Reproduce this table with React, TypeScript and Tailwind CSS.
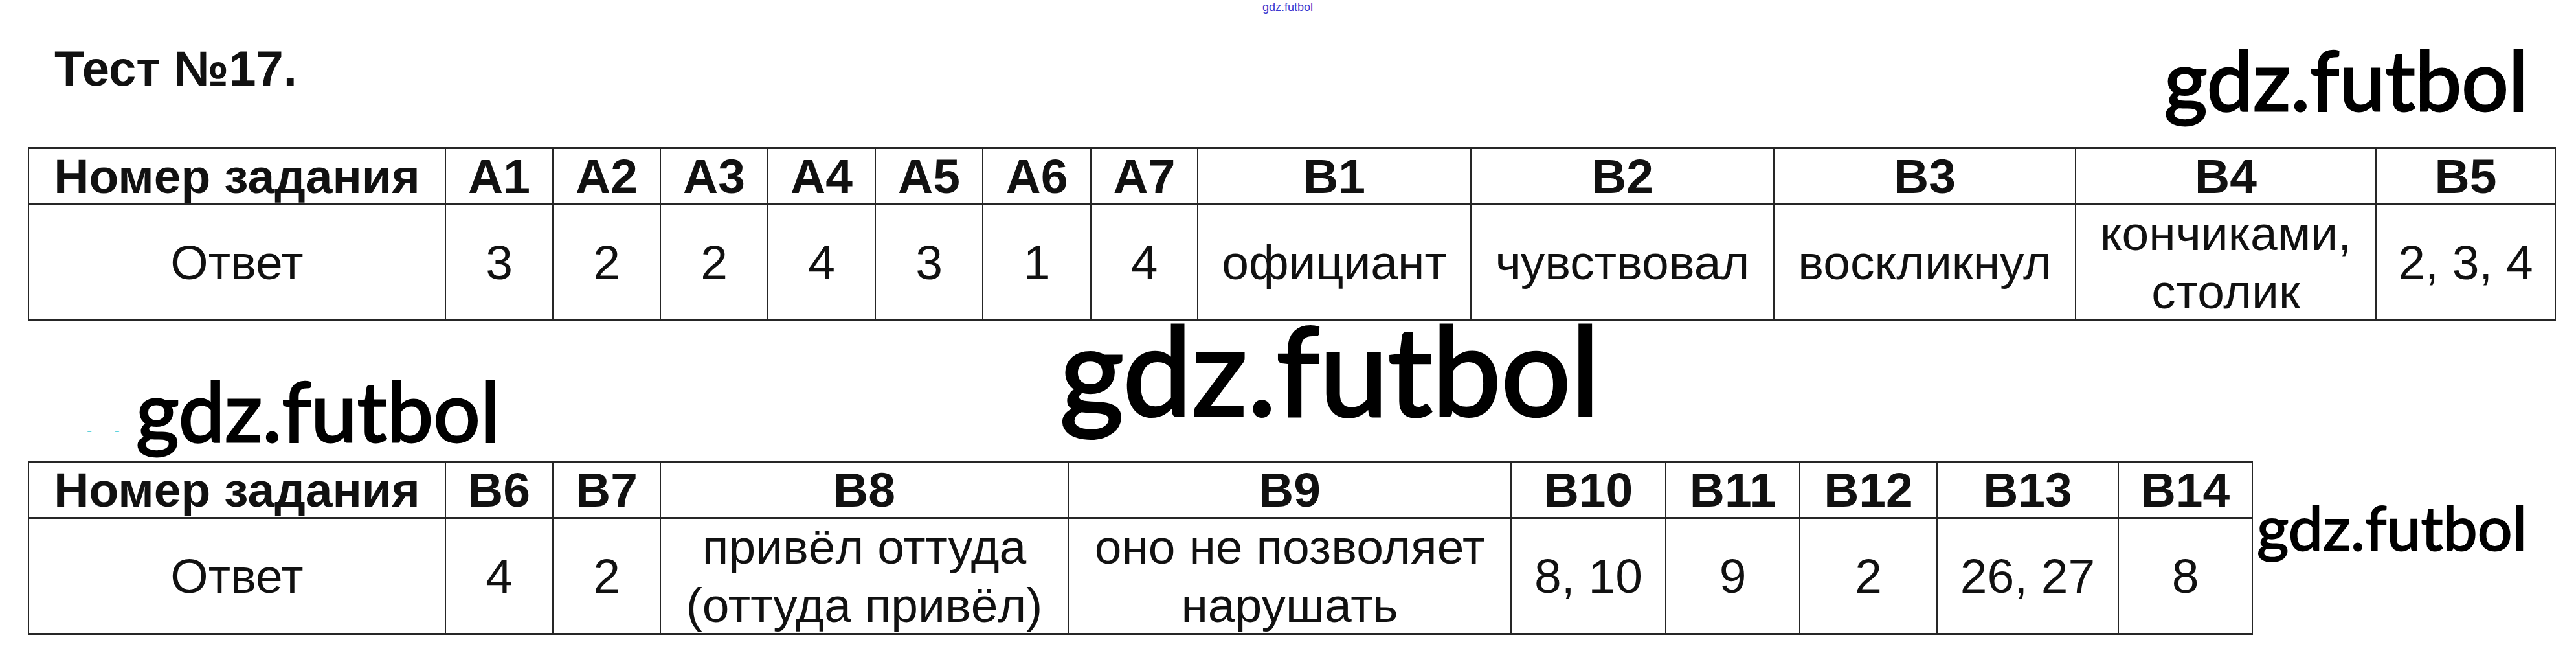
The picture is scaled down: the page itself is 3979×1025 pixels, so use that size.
import React from 'react';

type Col = { head: string; answer: string[]; w: number };

const test1: Col[] = [
  { head: 'Номер задания', answer: ['Ответ'], w: 644 },
  { head: 'А1', answer: ['3'], w: 166 },
  { head: 'А2', answer: ['2'], w: 166 },
  { head: 'А3', answer: ['2'], w: 166 },
  { head: 'А4', answer: ['4'], w: 166 },
  { head: 'А5', answer: ['3'], w: 166 },
  { head: 'А6', answer: ['1'], w: 167 },
  { head: 'А7', answer: ['4'], w: 165 },
  { head: 'В1', answer: ['официант'], w: 422 },
  { head: 'В2', answer: ['чувствовал'], w: 468 },
  { head: 'В3', answer: ['воскликнул'], w: 466 },
  { head: 'В4', answer: ['кончиками,', 'столик'], w: 464 },
  { head: 'В5', answer: ['2, 3, 4'], w: 277 },
];

const test2: Col[] = [
  { head: 'Номер задания', answer: ['Ответ'], w: 644 },
  { head: 'В6', answer: ['4'], w: 166 },
  { head: 'В7', answer: ['2'], w: 166 },
  { head: 'В8', answer: ['привёл оттуда', '(оттуда привёл)'], w: 630 },
  { head: 'В9', answer: ['оно не позволяет', 'нарушать'], w: 684 },
  { head: 'В10', answer: ['8, 10'], w: 239 },
  { head: 'В11', answer: ['9'], w: 207 },
  { head: 'В12', answer: ['2'], w: 212 },
  { head: 'В13', answer: ['26, 27'], w: 280 },
  { head: 'В14', answer: ['8'], w: 207 },
];

const AnswerTable: React.FC<{ cols: Col[] }> = ({ cols }) => (
  <div className="flex border-t-[3px] border-l-2 border-[#262626] self-start">
    {cols.map((c, i) => (
      <div key={i} className="flex flex-col shrink-0" style={{ width: c.w }}>
        <div className="h-[87px] flex items-center justify-center border-r-2 border-b-[3px] border-[#262626] font-bold text-[75px] leading-none whitespace-nowrap">
          {c.head}
        </div>
        <div className="h-[179px] flex flex-col items-center justify-center border-r-2 border-b-[3px] border-[#262626] text-[75px] leading-[90px] whitespace-nowrap">
          {c.answer.map((line, j) => (
            <span key={j}>{line}</span>
          ))}
        </div>
      </div>
    ))}
  </div>
);

// watermark text: Lato regular thickened a little to look like Calibri
const Mark: React.FC<{ className: string }> = ({ className }) => (
  <div className={`absolute font-['Lato',sans-serif] text-black leading-none whitespace-nowrap ${className}`}>gdz.futbol</div>
);

export default function App() {
  return (
    <div className="relative w-[3979px] h-[1025px] bg-white overflow-hidden text-[#111] font-['Liberation_Sans',Arial,sans-serif]">
      <div className="flex flex-col pt-[68px] pl-[43px]">
        <h1 className="h-[76px] pl-[41px] text-[76px] font-bold leading-none whitespace-nowrap">Тест №17.</h1>
        <div className="mt-[83px] flex">
          <AnswerTable cols={test1} />
        </div>
        <div className="mt-[215px] flex">
          <AnswerTable cols={test2} />
        </div>
      </div>

      {/* watermarks over the page */}
      <div className="absolute left-[1950px] top-[2px] text-[18px] leading-none text-[#3a3ad0] font-['Liberation_Sans',sans-serif]">gdz.futbol</div>
      <Mark className="left-[3343px] top-[58px] text-[128px] [-webkit-text-stroke:3px_black]" />
      <Mark className="left-[1637px] top-[473px] text-[190px] [-webkit-text-stroke:4px_black]" />
      <Mark className="left-[210px] top-[569px] text-[128px] [-webkit-text-stroke:3px_black]" />
      <Mark className="left-[3486px] top-[766px] text-[95px] [-webkit-text-stroke:2px_black]" />
      <div className="absolute left-[134px] top-[652px] text-[24px] leading-none text-[#5fd3dc] tracking-[14px]">- -</div>
    </div>
  );
}
